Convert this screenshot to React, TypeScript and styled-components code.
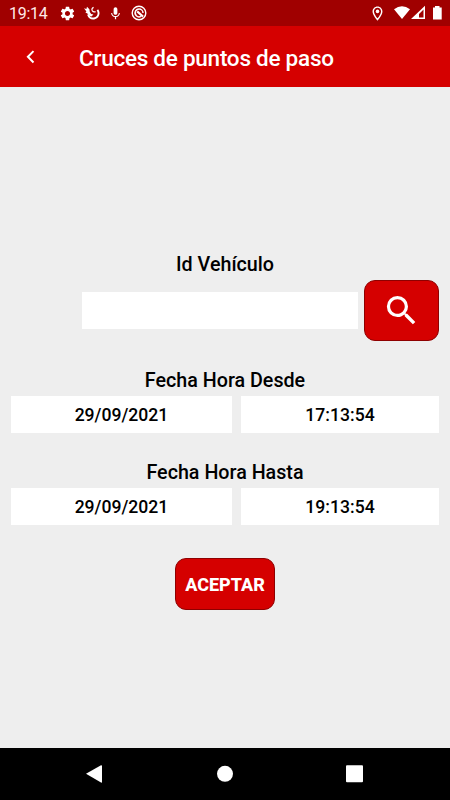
import React from "react";
import styled, { createGlobalStyle } from "styled-components";
import { MdSettings, MdMic, MdOutlineLocationOn, MdSearch } from "react-icons/md";

const GlobalStyle = createGlobalStyle`
  *, *::before, *::after { box-sizing: border-box; }
  body { margin: 0; background: #eee; font-family: Roboto, sans-serif; }
`;

const Screen = styled.div`
  width: 450px;
  height: 800px;
  display: flex;
  flex-direction: column;
  overflow: hidden;
  background: #eee;
  color: #000;
`;

const StatusBar = styled.div`
  height: 26px;
  flex: none;
  display: flex;
  align-items: center;
  padding: 0 8px 0 9px;
  background: #a00000;
  color: #fff;
  svg { display: block; flex: none; }
`;

const Clock = styled.span`
  width: 50px;
  font-size: 16px;
  line-height: 26px;
  letter-spacing: -0.3px;
  color: #ffe9e9;
  padding-top: 2px;
`;

const Notifications = styled.div`
  flex: 1;
  display: flex;
  align-items: center;
  gap: 8px;
`;

const SystemIcons = styled.div`
  display: flex;
  align-items: center;
`;

const Header = styled.header`
  height: 61px;
  flex: none;
  display: flex;
  align-items: center;
  padding-left: 22px;
  background: #d50000;
  color: #fff;
`;

const BackButton = styled.button`
  width: 57px;
  height: 40px;
  padding: 0 0 0 4px;
  border: 0;
  background: none;
  display: flex;
  align-items: center;
`;

const Title = styled.h1`
  margin: 2px 0 0;
  font-size: 22.5px;
  font-weight: 500;
  line-height: 30px;
  letter-spacing: -0.25px;
  white-space: nowrap;
`;

const Main = styled.main`
  flex: 1;
  display: flex;
  flex-direction: column;
  padding: 166px 11px 0;
`;

const Label = styled.label`
  display: block;
  height: 24px;
  font-size: 19.7px;
  font-weight: 500;
  line-height: 24px;
  text-align: center;
`;

const VehicleRow = styled.div`
  display: flex;
  align-items: center;
  justify-content: flex-end;
  gap: 6px;
  height: 61px;
  margin: 3px 0 28px;
`;

const VehicleInput = styled.input`
  width: 276px;
  height: 37px;
  border: 0;
  border-radius: 0;
  background: #fff;
  font: 500 18px Roboto, sans-serif;
`;

const ActionButton = styled.button<{ $width: number; $height: number }>`
  width: ${(p) => p.$width}px;
  height: ${(p) => p.$height}px;
  flex: none;
  display: flex;
  align-items: center;
  justify-content: center;
  padding: 0;
  border: 1px solid #8e0000;
  border-radius: 11px;
  background: #d50000;
  color: #fff;
  font: 800 18px Roboto, sans-serif;
`;

const DateRow = styled.div`
  display: grid;
  grid-template-columns: 221px 198px;
  grid-template-rows: 37px;
  gap: 9px;
  height: 37px;
  margin: 3px 0 28px;
`;

const DateField = styled.div`
  background: #fff;
  font-size: 17.6px;
  font-weight: 500;
  line-height: 37px;
  padding-top: 1px;
  height: 37px;
  text-align: center;
`;

const Submit = styled.div`
  display: flex;
  justify-content: center;
  margin-top: 5px;
`;

const NavBar = styled.nav`
  height: 52px;
  flex: none;
  background: #000;
  svg { display: block; }
`;

const periods = [
  { label: "Fecha Hora Desde", date: "29/09/2021", time: "17:13:54" },
  { label: "Fecha Hora Hasta", date: "29/09/2021", time: "19:13:54" },
];

const BirdIcon = () => (
  <svg width="16" height="16" viewBox="0 0 16 16" fill="none">
    <path d="M0 3.2 2.4 4 3 1.8 5.4 4.2 5.8 7Q6.8 9.6 9.4 9.6L7.5 11.6Q4.5 11 3.4 8.6L1.4 7.6 2.4 6.6Z" fill="#fff" />
    <path d="M4 9.5Q5.5 14 10 13.5Q14.5 12.6 14.6 8Q14.5 6.2 13.4 4.8" stroke="#fff" strokeWidth="1.9" />
    <path d="M9.6 2.4Q7.2 3.6 8.2 5.6Q9.4 7.4 11.6 6.6" stroke="#fff" strokeWidth="1.2" />
  </svg>
);

const SlashIcon = () => (
  <svg width="16" height="16" viewBox="0 0 16 16" fill="none" stroke="#fff">
    <circle cx="8" cy="8" r="6.8" strokeWidth="1.4" />
    <path d="M10 11.4A4 4 0 0 1 4.6 6Q5.8 4 8 4A4 4 0 0 1 12 8" strokeWidth="1.5" />
    <path d="m6.2 6.4 5.8 5.2" strokeWidth="2.1" />
  </svg>
);

export default function App() {
  return (
    <Screen>
      <GlobalStyle />
      <StatusBar>
        <Clock>19:14</Clock>
        <Notifications>
          <MdSettings size={17} />
          <BirdIcon />
          <MdMic size={15} />
          <SlashIcon />
        </Notifications>
        <SystemIcons>
          <MdOutlineLocationOn size={17} />
          <svg width="56" height="16" viewBox="370 5 56 16" fill="#fff">
            <path d="M378 9.2Q386 3.5 394 9.2L386 19Z" />
            <path fillRule="evenodd" d="M395 19 409 5.8V19ZM403 17.5H407.5V9.5L403 14Z" />
            <path d="M417 7.5H419V6H423.5V7.5H425.7V19.5H417Z" />
          </svg>
        </SystemIcons>
      </StatusBar>
      <Header>
        <BackButton aria-label="Volver">
          <svg width="10" height="14" viewBox="0 0 10 14" fill="none">
            <path d="M7.5 1.1 1.9 6.8l5.6 5.7" stroke="#fff" strokeWidth="2" />
          </svg>
        </BackButton>
        <Title>Cruces de puntos de paso</Title>
      </Header>
      <Main>
        <Label htmlFor="vehicle">Id Vehículo</Label>
        <VehicleRow>
          <VehicleInput id="vehicle" />
          <ActionButton $width={75} $height={61} aria-label="Buscar">
            <MdSearch size={39} />
          </ActionButton>
        </VehicleRow>
        {periods.map((period) => (
          <React.Fragment key={period.label}>
            <Label as="div">{period.label}</Label>
            <DateRow>
              <DateField>{period.date}</DateField>
              <DateField>{period.time}</DateField>
            </DateRow>
          </React.Fragment>
        ))}
        <Submit>
          <ActionButton $width={100} $height={52}>ACEPTAR</ActionButton>
        </Submit>
      </Main>
      <NavBar>
        <svg width="450" height="52" viewBox="0 0 450 52" fill="#fff">
          <path d="M86 25.8 101 17.2Q102 17 102 18V34Q102 35 101 34.5Z" />
          <circle cx="225" cy="25.8" r="8" />
          <rect x="346" y="17.2" width="17" height="17" rx="1" />
        </svg>
      </NavBar>
    </Screen>
  );
}
